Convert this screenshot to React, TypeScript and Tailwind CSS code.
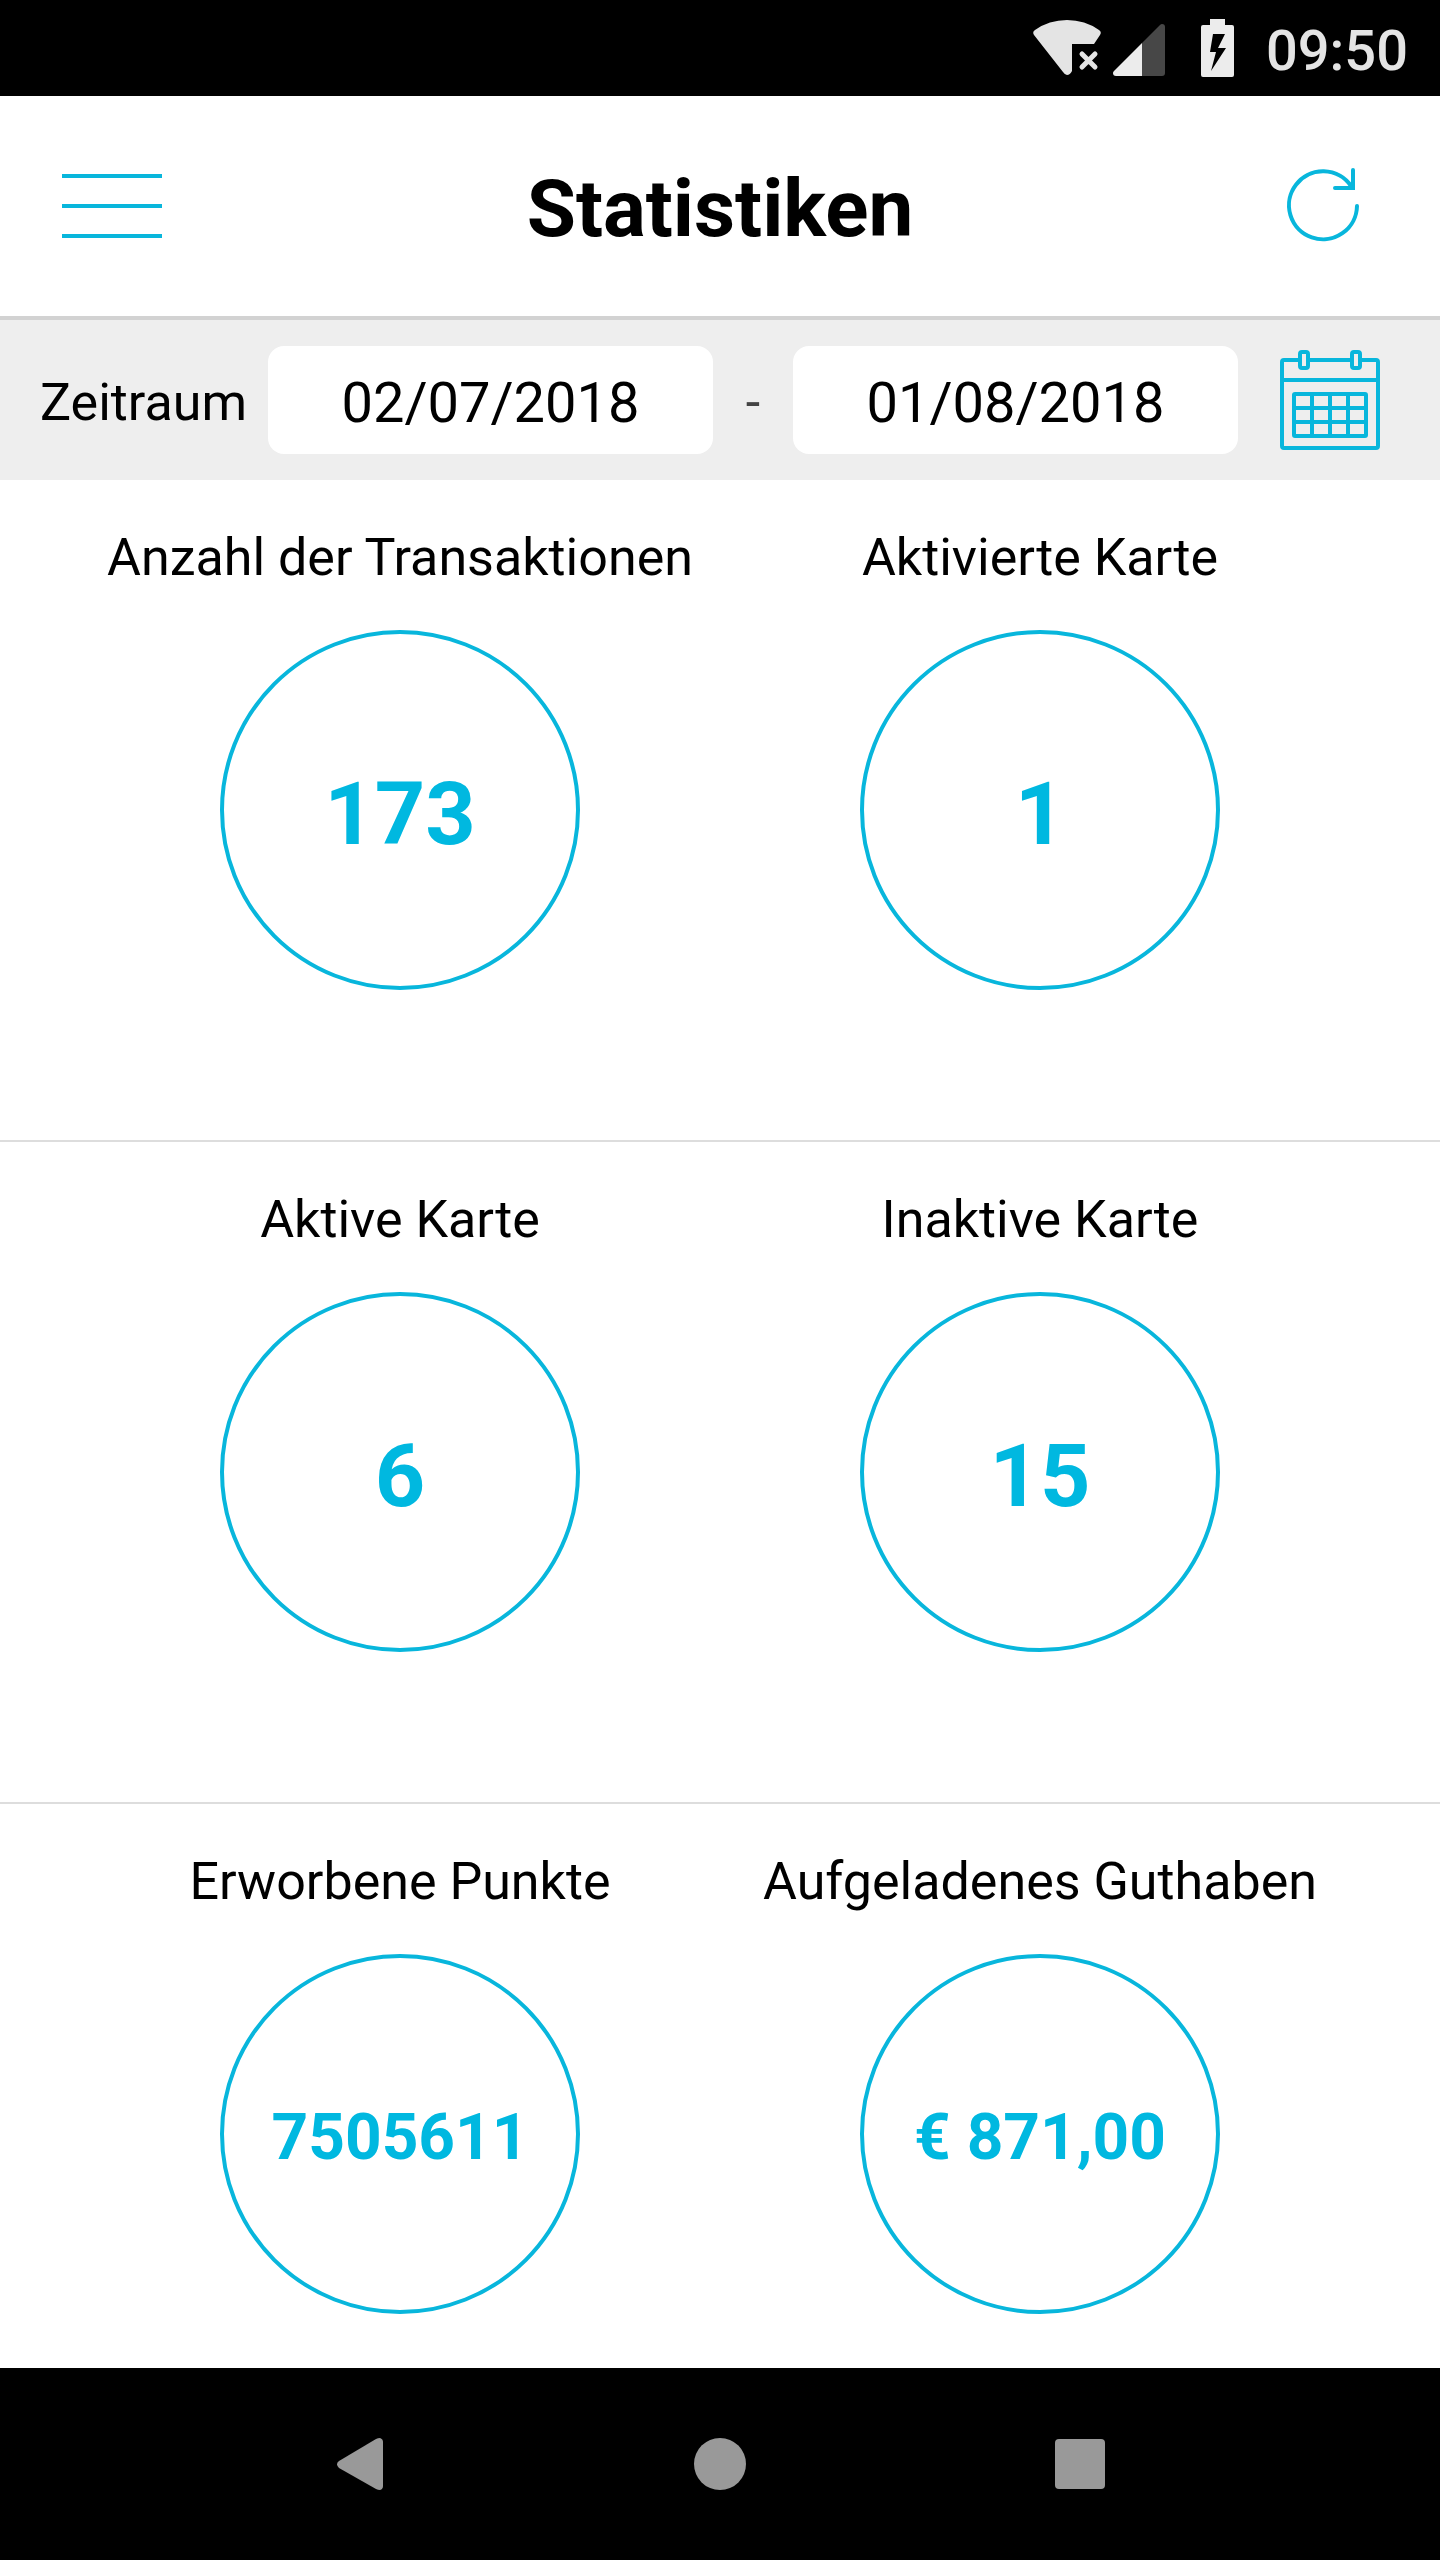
import React, { useState } from "react";

type Stat = { label: string; value: string; compact?: boolean };

const rows: Stat[][] = [
  [
    { label: "Anzahl der Transaktionen", value: "173" },
    { label: "Aktivierte Karte", value: "1" },
  ],
  [
    { label: "Aktive Karte", value: "6" },
    { label: "Inaktive Karte", value: "15" },
  ],
  [
    { label: "Erworbene Punkte", value: "7505611", compact: true },
    { label: "Aufgeladenes Guthaben", value: "€ 871,00", compact: true },
  ],
];

function WifiOffIcon() {
  return (
    <svg width="68" height="56" viewBox="0 0 68 56" aria-hidden="true">
      <path
        d="M1 15Q-1 12 2 10Q16 0 34 0T66 10Q69 12 67 15L61 24H39V51Q37 55 34 55Q32 55 30 52Z"
        fill="#e4e4e4"
      />
      <path d="M49 34L62 47M62 34L49 47" stroke="#e4e4e4" strokeWidth="5" strokeLinecap="round" />
    </svg>
  );
}

function SignalIcon() {
  return (
    <svg width="52" height="52" viewBox="0 0 52 52" aria-hidden="true">
      <path d="M29 19L47 1Q48 0 49 0Q52 0 52 3V49Q52 52 49 52H29Z" fill="#474747" />
      <path d="M29 19V52H3Q0 52 0 49Q0 48 1 47Z" fill="#ececec" />
    </svg>
  );
}

function BatteryIcon() {
  return (
    <svg width="33" height="58" viewBox="0 0 33 58" aria-hidden="true">
      <path d="M9 0H24V6H31Q33 6 33 8V56Q33 58 31 58H2Q0 58 0 56V8Q0 6 2 6H9Z" fill="#ececec" />
      <path d="M12 15H24L17 29H25L10 52L15 33H9Z" fill="#000" />
    </svg>
  );
}

function MenuIcon() {
  return (
    <svg width="100" height="80" viewBox="0 0 100 80" stroke="#08b6dc" strokeWidth="4" aria-hidden="true">
      <path d="M0 10H100M0 40H100M0 70H100" />
    </svg>
  );
}

function RefreshIcon() {
  return (
    <svg
      width="100"
      height="80"
      viewBox="0 0 100 80"
      fill="none"
      stroke="#08b6dc"
      strokeWidth="4"
      strokeLinecap="round"
      aria-hidden="true"
    >
      <path d="M79 40A34 34 0 1 1 73 20" />
      <path d="M75 4V22H57" />
    </svg>
  );
}

function CalendarIcon() {
  return (
    <svg width="100" height="100" viewBox="0 0 100 100" fill="none" stroke="#08b6dc" strokeWidth="4" aria-hidden="true">
      <path d="M20 10H4Q2 10 2 12V96Q2 98 4 98H96Q98 98 98 96V12Q98 10 96 10H80M28 10H72M2 30H98" />
      <rect x="20" y="2" width="8" height="16" rx="2" />
      <rect x="72" y="2" width="8" height="16" rx="2" />
      <rect x="14" y="44" width="72" height="42" rx="1" />
      <path d="M14 58H86M14 72H86M32 44V86M50 44V86M68 44V86" />
    </svg>
  );
}

function StatusBar() {
  return (
    <div className="flex h-24 items-center justify-end bg-black pr-8 text-[#e4e4e4]">
      <WifiOffIcon />
      <div className="ml-3 pt-1">
        <SignalIcon />
      </div>
      <div className="ml-9">
        <BatteryIcon />
      </div>
      <time className="ml-8 pt-1.5 text-[56px] leading-none font-medium">09:50</time>
    </div>
  );
}

function StatCell({ label, value, compact }: Stat) {
  return (
    <div className="flex flex-col items-center">
      <dt className="text-[52px] leading-[62px] whitespace-nowrap text-black">{label}</dt>
      <dd
        className={
          "mt-[41px] flex size-90 items-center justify-center rounded-full border-4 border-[#08b6dc] pt-2 leading-none font-bold text-[#00b8e0] " +
          (compact ? "text-[64px]" : "text-[88px]")
        }
      >
        {value}
      </dd>
    </div>
  );
}

export default function App() {
  const [from, setFrom] = useState("02/07/2018");
  const [to, setTo] = useState("01/08/2018");
  const field =
    "h-27 min-w-0 flex-1 rounded-2xl bg-white pt-1.5 text-center text-[56px] leading-none text-black outline-none";

  return (
    <div className="flex min-h-screen flex-col bg-white font-[Roboto,sans-serif]">
      <StatusBar />
      <header className="flex h-56 items-center justify-between border-b-4 border-[#d2d2d2] px-[62px]">
        <button type="button" aria-label="Menü">
          <MenuIcon />
        </button>
        <h1 className="pt-1.5 text-[80px] leading-none font-bold text-black">Statistiken</h1>
        <button type="button" aria-label="Aktualisieren">
          <RefreshIcon />
        </button>
      </header>

      <form className="flex h-40 items-center bg-[#eeeeee] pr-15 pl-10">
        <label htmlFor="from" className="w-[228px] pt-1.5 text-[52px] leading-none text-black">
          Zeitraum
        </label>
        <input id="from" type="text" className={field} value={from} onChange={(e) => setFrom(e.target.value)} />
        <span className="w-20 pt-1.5 text-center text-[52px] leading-none text-[#444]">-</span>
        <input
          type="text"
          aria-label="Zeitraum bis"
          className={field}
          value={to}
          onChange={(e) => setTo(e.target.value)}
        />
        <button type="button" aria-label="Kalender" className="ml-[42px]">
          <CalendarIcon />
        </button>
      </form>

      <main className="flex-1">
        {rows.map((row, i) => (
          <dl
            key={row[0].label}
            className={
              "grid grid-cols-2 px-20 pt-[47px] " +
              (i < rows.length - 1 ? "border-b-2 border-[#dddddd] pb-[150px]" : "")
            }
          >
            {row.map((stat) => (
              <StatCell key={stat.label} {...stat} />
            ))}
          </dl>
        ))}
      </main>

      <nav className="grid h-48 grid-cols-3 items-center justify-items-center bg-black px-45">
        <button type="button" aria-label="Zurück">
          <svg width="46" height="52" viewBox="0 0 46 52" fill="#999" aria-hidden="true">
            <path d="M2 23L39 1Q41 0 43 0Q46 1 46 4V48Q46 51 43 52Q41 52 39 51L2 30Q-2 26 2 23Z" />
          </svg>
        </button>
        <button type="button" aria-label="Startseite" className="size-13 rounded-full bg-[#999]" />
        <button type="button" aria-label="Übersicht" className="size-[50px] rounded-sm bg-[#999]" />
      </nav>
    </div>
  );
}
